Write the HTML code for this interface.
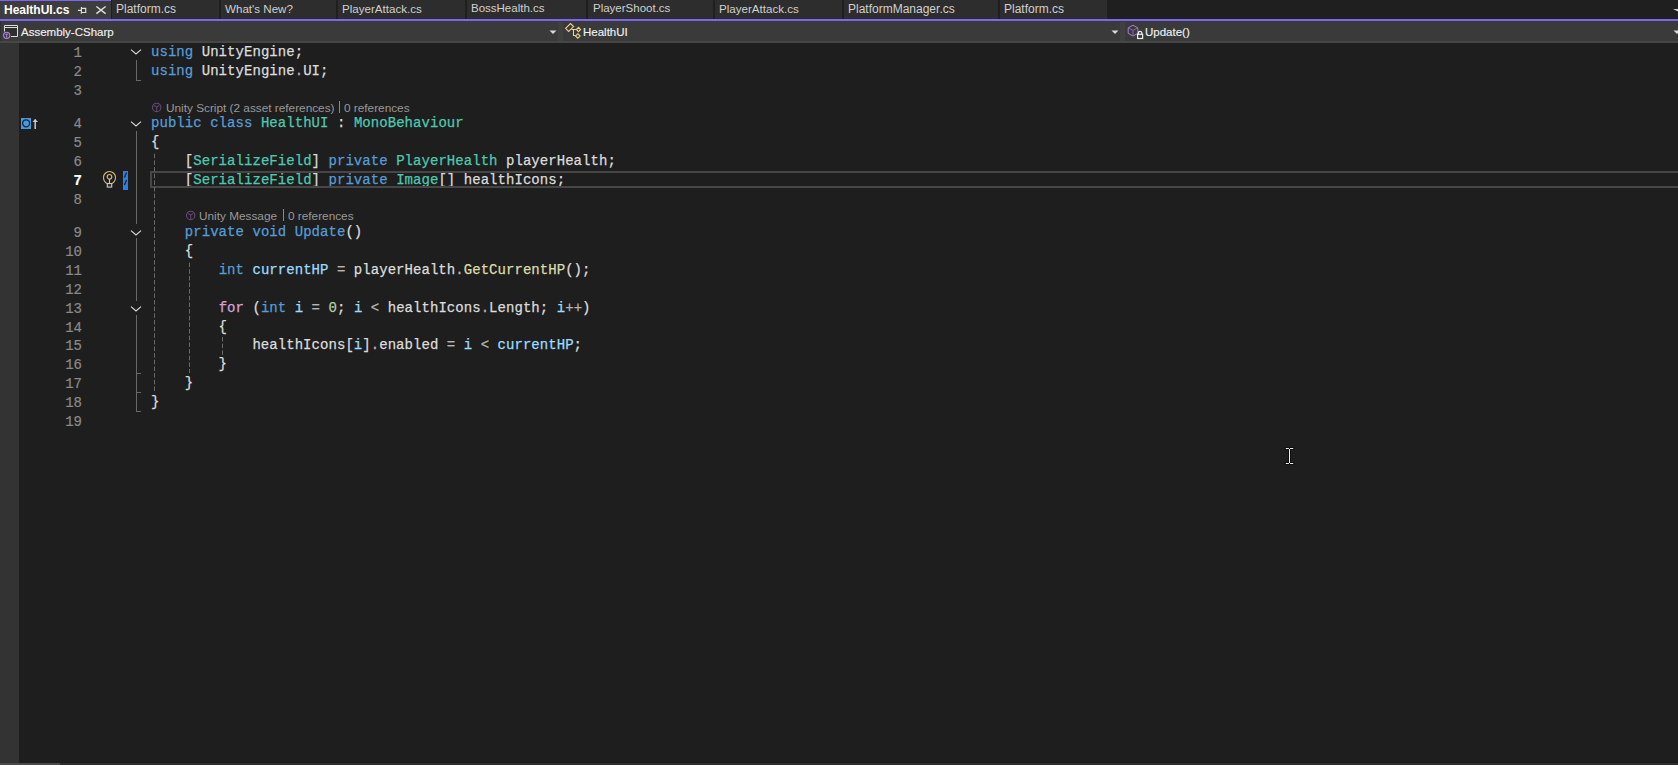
<!DOCTYPE html>
<html><head><meta charset="utf-8">
<style>
*{margin:0;padding:0;box-sizing:border-box}
html,body{width:1678px;height:765px;overflow:hidden;background:#1e1e1e}
body{position:relative;font-family:"Liberation Sans",sans-serif}
.abs{position:absolute}
#tabs{left:0;top:0;width:1678px;height:19px;background:#1f1f1f}
.tab{position:absolute;top:0;height:19px;background:#2d2d2d;color:#d0d0d0;font-size:12px;line-height:19px;white-space:pre}
.tab span{position:absolute;top:0px}
.sep{position:absolute;top:0;width:1px;height:19px;background:#222}
#acc{left:0;top:19px;width:1678px;height:2px;background:#7a66f0}
#nav{left:0;top:21px;width:1678px;height:20px;background:#3a3a3a}
#navb{left:0;top:41px;width:1678px;height:2px;background:#464646}
#margin{left:0;top:43px;width:19px;height:720px;background:#333333}
#hs{left:0;top:763px;width:1678px;height:2px;background:#2e2e2e}
.nav-t{position:absolute;top:22px;height:20px;line-height:20px;font-size:11.5px;color:#f0f0f0;-webkit-text-stroke:0.15px currentColor;white-space:pre}
.ln{position:absolute;left:40px;width:42px;text-align:right;font-family:"Liberation Mono",monospace;font-size:14px;-webkit-text-stroke:0.2px currentColor;color:#8a8a8a;height:19px;line-height:19px;padding-top:1px}
.code{position:absolute;left:151px;font-family:"Liberation Mono",monospace;font-size:14px;letter-spacing:0.05px;-webkit-text-stroke:0.25px currentColor;color:#dcdcdc;height:19px;line-height:19px;white-space:pre}
.k{color:#569cd6}.t{color:#4ec9b0}.m{color:#dcdcaa}.v{color:#9cdcfe}.o{color:#b4b4b4}.c{color:#d8a0df}.n{color:#b5cea8}
.lens{position:absolute;font-size:11.8px;color:#999999;white-space:pre;height:14px;line-height:14px}
.gd{position:absolute;width:1px;background-image:linear-gradient(#5a5a5a 60%,transparent 60%);background-size:1px 5px}
.fl{position:absolute;left:136px;width:1px;background:#686868}
.fh{position:absolute;left:136px;width:5px;height:1px;background:#686868}
</style></head><body>
<div id="tabs" class="abs">
  <div class="tab" style="left:0;width:111px;background:#3d3d3d;color:#fff;font-weight:bold"><div class="abs" style="left:0;top:0;width:111px;height:1px;background:#7a66f0"></div><span style="left:4px;top:1px">HealthUI.cs</span></div>
  <div class="tab" style="left:112px;width:107px"><span style="left:4px">Platform.cs</span></div>
  <div class="tab" style="left:221px;width:115px"><span style="left:4px;top:-1px;font-size:11.6px">What's New?</span></div>
  <div class="tab" style="left:338px;width:127px"><span style="left:4px;top:-1px;font-size:11.6px">PlayerAttack.cs</span></div>
  <div class="tab" style="left:467px;width:119px"><span style="left:4px;top:-1px;font-size:11.5px">BossHealth.cs</span></div>
  <div class="tab" style="left:588px;width:125px"><span style="left:5px;top:-1px;font-size:11.5px">PlayerShoot.cs</span></div>
  <div class="tab" style="left:715px;width:127px"><span style="left:4px;top:-1px;font-size:11.6px">PlayerAttack.cs</span></div>
  <div class="tab" style="left:844px;width:154px"><span style="left:4px">PlatformManager.cs</span></div>
  <div class="tab" style="left:1000px;width:107px"><span style="left:4px">Platform.cs</span></div>
</div>
<div id="acc" class="abs"></div>
<div id="nav" class="abs"></div>
<div id="navb" class="abs"></div>
<div class="nav-t" style="left:21px">Assembly-CSharp</div>
<div class="nav-t" style="left:583px">HealthUI</div>
<div class="nav-t" style="left:1145px">Update()</div>
<div id="margin" class="abs"></div>
<div id="hs" class="abs"></div>

<!-- line numbers -->
<div class="ln" style="top:43px">1</div>
<div class="ln" style="top:62px">2</div>
<div class="ln" style="top:81px">3</div>
<div class="ln" style="top:114px">4</div>
<div class="ln" style="top:133px">5</div>
<div class="ln" style="top:152px">6</div>
<div class="ln" style="top:171px;color:#fff;font-weight:bold">7</div>
<div class="ln" style="top:190px">8</div>
<div class="ln" style="top:223px">9</div>
<div class="ln" style="top:242px">10</div>
<div class="ln" style="top:261px">11</div>
<div class="ln" style="top:280px">12</div>
<div class="ln" style="top:299px">13</div>
<div class="ln" style="top:318px">14</div>
<div class="ln" style="top:336px">15</div>
<div class="ln" style="top:355px">16</div>
<div class="ln" style="top:374px">17</div>
<div class="ln" style="top:393px">18</div>
<div class="ln" style="top:412px">19</div>

<!-- code -->
<div class="code" style="top:43px"><span class="k">using</span> UnityEngine;</div>
<div class="code" style="top:62px"><span class="k">using</span> UnityEngine<span class="o">.</span>UI;</div>
<div class="lens" style="left:166px;top:101px">Unity Script (2 asset references)</div><div class="abs" style="left:339px;top:101px;width:1px;height:12px;background:#8a8a8a"></div><div class="lens" style="left:344px;top:101px">0 references</div>
<div class="code" style="top:114px"><span class="k">public</span> <span class="k">class</span> <span class="t">HealthUI</span> : <span class="t">MonoBehaviour</span></div>
<div class="code" style="top:133px">{</div>
<div class="code" style="top:152px">    [<span class="t">SerializeField</span>] <span class="k">private</span> <span class="t">PlayerHealth</span> playerHealth;</div>
<div class="code" style="top:171px">    [<span class="t">SerializeField</span>] <span class="k">private</span> <span class="t">Image</span>[] healthIcons;</div>
<div class="lens" style="left:199px;top:209px">Unity Message</div><div class="abs" style="left:283px;top:209px;width:1px;height:12px;background:#8a8a8a"></div><div class="lens" style="left:288px;top:209px">0 references</div>
<div class="code" style="top:223px">    <span class="k">private</span> <span class="k">void</span> <span class="k">Update</span>()</div>
<div class="code" style="top:242px">    {</div>
<div class="code" style="top:261px">        <span class="k">int</span> <span class="v">currentHP</span> <span class="o">=</span> playerHealth<span class="o">.</span><span class="m">GetCurrentHP</span>();</div>
<div class="code" style="top:299px">        <span class="c">for</span> (<span class="k">int</span> <span class="v">i</span> <span class="o">=</span> <span class="n">0</span>; <span class="v">i</span> <span class="o">&lt;</span> healthIcons<span class="o">.</span>Length; <span class="v">i</span><span class="o">++</span>)</div>
<div class="code" style="top:318px">        {</div>
<div class="code" style="top:336px">            healthIcons[<span class="v">i</span>]<span class="o">.</span>enabled <span class="o">=</span> <span class="v">i</span> <span class="o">&lt;</span> <span class="v">currentHP</span>;</div>
<div class="code" style="top:355px">        }</div>
<div class="code" style="top:374px">    }</div>
<div class="code" style="top:393px">}</div>


<!-- tab icons -->
<svg class="abs" style="left:76px;top:5px" width="12" height="11" viewBox="0 0 12 11"><path d="M1.9 5.4H5.4M5.4 2V8.8M5.4 3.4H9.7V7.5H5.4" stroke="#e0e0e0" stroke-width="1.15" fill="none"/></svg>
<svg class="abs" style="left:95px;top:5px" width="12" height="10" viewBox="0 0 12 10"><path d="M1.4 1.5L10.6 8.6M10.6 1.5L1.4 8.6" stroke="#e0e0e0" stroke-width="1.45" fill="none"/></svg>
<!-- tab strip dropdown far right -->
<svg class="abs" style="left:1673px;top:9px" width="6" height="5" viewBox="0 0 6 5"><path d="M0 0H7L6 3Z" fill="#d0d0d0"/></svg>
<!-- nav bar pieces -->
<div class="abs" style="left:0;top:21px;width:1px;height:20px;background:#303030"></div>
<div class="abs" style="left:558px;top:22px;width:5px;height:19px;background:#404040"></div>
<div class="abs" style="left:1120px;top:22px;width:5px;height:19px;background:#404040"></div>
<svg class="abs" style="left:549px;top:30px" width="8" height="5" viewBox="0 0 8 5"><path d="M0.5 0.5H7.5L4 4Z" fill="#d8d8d8"/></svg>
<svg class="abs" style="left:1111px;top:30px" width="8" height="5" viewBox="0 0 8 5"><path d="M0.5 0.5H7.5L4 4Z" fill="#d8d8d8"/></svg>
<svg class="abs" style="left:1673px;top:30px" width="6" height="5" viewBox="0 0 6 5"><path d="M0.5 0.5H7.5L4 4Z" fill="#d8d8d8"/></svg>
<!-- assembly icon -->
<svg class="abs" style="left:2px;top:23px" width="18" height="18" viewBox="0 0 18 18"><rect x="2.5" y="2.5" width="13" height="11" fill="#2e2e2e"/><path d="M2.5 8.5V2.5H15.5V13.5H9" stroke="#dcdcdc" stroke-width="1" fill="none"/><path d="M3 4.5H15" stroke="#dcdcdc" stroke-width="1"/><circle cx="4.7" cy="12.3" r="3.1" stroke="#b085e0" stroke-width="1.1" fill="#3a3a3a"/><path d="M3.3 11.2H6.1M4.7 11.2V14.7" stroke="#b085e0" stroke-width="1" fill="none"/></svg>
<!-- class icon -->
<svg class="abs" style="left:563px;top:22px" width="20" height="19" viewBox="0 0 20 19"><g stroke="#efd08a" stroke-width="1.1" fill="none" stroke-linejoin="miter"><path d="M2.6 6.3L7.5 1.5L10.6 4.6L5.6 9.4Z"/><path d="M15.5 5.4L17.6 7.5L15.5 9.6L13.4 7.5Z"/><path d="M14.8 11.7L17.1 14L14.8 16.3L12.5 14Z"/><path d="M8.5 7.5H13M10.5 7.5V13.5H12.5"/></g></svg>
<!-- method icon -->
<svg class="abs" style="left:1126px;top:22px" width="20" height="19" viewBox="0 0 20 19"><g stroke="#a77ad6" stroke-width="1" fill="none"><path d="M7 3.2L11.8 5.8V11.4L7 14L2.2 11.4V5.8Z"/><path d="M2.2 5.8L7 8.4L11.8 5.8M7 8.4V14" stroke-opacity="0.7"/></g><path d="M12.3 12.2V11.2A1.8 1.8 0 0 1 15.9 11.2V12.2" stroke="#f0f0f0" stroke-width="1.2" fill="none"/><rect x="11.6" y="12.3" width="5" height="4.2" stroke="#f0f0f0" stroke-width="1.2" fill="#3a3a3a"/></svg>

<!-- gutter: line 4 indicator -->
<svg class="abs" style="left:21px;top:118px" width="10" height="11" viewBox="0 0 10 11"><rect width="10" height="11" fill="#4898dc"/><circle cx="5.1" cy="5.3" r="3.5" stroke="#14253c" stroke-width="1.3" fill="none"/></svg>
<svg class="abs" style="left:32px;top:118px" width="7" height="12" viewBox="0 0 7 12"><path d="M3.2 1.5V11" stroke="#c8c8c8" stroke-width="1.5"/><path d="M0.5 4L3.2 1L6 4Z" fill="#c8c8c8"/></svg>
<!-- lightbulb -->
<svg class="abs" style="left:102px;top:170px" width="15" height="19" viewBox="0 0 15 19"><path d="M5 13.5C2.5 12 1.5 10 1.5 7.5A6 6 0 0 1 13.5 7.5C13.5 10 12.5 12 10 13.5" stroke="#d9b778" stroke-width="1.1" fill="none"/><circle cx="7.5" cy="6.8" r="2.3" stroke="#d9b778" stroke-width="1.2" fill="none"/><path d="M7.5 9V13" stroke="#e6c47c" stroke-width="1.1"/><rect x="5.3" y="13.5" width="4.4" height="3.6" stroke="#c8c8c8" stroke-width="1.1" fill="#303030"/></svg>
<!-- change bar -->
<svg class="abs" style="left:123px;top:171px" width="5" height="19" viewBox="0 0 5 19"><rect width="5" height="19" fill="#2f7fe3"/><path d="M1.5 6.5L3.5 1.5M1.5 14L3.5 9" stroke="#16243a" stroke-width="1.3"/></svg>

<!-- current line box -->
<div class="abs" style="left:150px;top:171px;width:1528px;height:17px;border:2px solid #464646;border-right:none"></div>

<!-- fold chevrons -->
<svg class="abs" style="left:130px;top:48px" width="12" height="8" viewBox="0 0 12 8"><path d="M1 1.6L6 5.9L11 1.6" stroke="#d8d8d8" stroke-width="1.2" fill="none"/></svg>
<svg class="abs" style="left:130px;top:120px" width="12" height="8" viewBox="0 0 12 8"><path d="M1 1.6L6 5.9L11 1.6" stroke="#d8d8d8" stroke-width="1.2" fill="none"/></svg>
<svg class="abs" style="left:130px;top:229px" width="12" height="8" viewBox="0 0 12 8"><path d="M1 1.6L6 5.9L11 1.6" stroke="#d8d8d8" stroke-width="1.2" fill="none"/></svg>
<svg class="abs" style="left:130px;top:305px" width="12" height="8" viewBox="0 0 12 8"><path d="M1 1.6L6 5.9L11 1.6" stroke="#d8d8d8" stroke-width="1.2" fill="none"/></svg>
<!-- fold lines -->
<div class="fl" style="top:60px;height:21px"></div><div class="fh" style="top:80px"></div>
<div class="fl" style="top:131px;height:93px"></div>
<div class="fl" style="top:238px;height:63px"></div>
<div class="fl" style="top:315px;height:97px"></div>
<div class="fh" style="top:373px"></div><div class="fh" style="top:392px"></div><div class="fh" style="top:411px"></div>
<!-- indent guides -->
<svg class="abs" style="left:0;top:0" width="240" height="420"><g stroke="#6a6a6a" stroke-width="1" stroke-dasharray="4.5 2.15"><path d="M154.5 153.7V392"/><path d="M189.5 262.6V373"/><path d="M222.5 337V355"/></g></svg>
<!-- codelens icons -->
<svg class="abs" style="left:151px;top:102px" width="12" height="12" viewBox="0 0 12 12"><circle cx="5.7" cy="5.4" r="4.2" stroke="#654a78" stroke-width="1.1" fill="none"/><path d="M3.2 3.6L5.7 5L8.2 3.6M5.7 5V9.5" stroke="#5a4470" stroke-width="1.1" fill="none"/></svg>
<svg class="abs" style="left:185px;top:210px" width="12" height="12" viewBox="0 0 12 12"><circle cx="5.7" cy="5.4" r="4.2" stroke="#654a78" stroke-width="1.1" fill="none"/><path d="M3.2 3.6L5.7 5L8.2 3.6M5.7 5V9.5" stroke="#5a4470" stroke-width="1.1" fill="none"/></svg>

<!-- mouse I-beam -->
<svg class="abs" style="left:1284px;top:446px" width="12" height="20" viewBox="0 0 12 20"><g stroke="#0c0c0c" stroke-width="2.6" fill="none" stroke-linecap="square"><path d="M2 2.5H9M5.5 3V17M2 17.5H9"/></g><g stroke="#f2f2f2" stroke-width="1" fill="none"><path d="M1.8 2.5H4.9M6.1 2.5H9.2M5.5 3V17M1.8 17.5H4.9M6.1 17.5H9.2"/></g></svg>
<!-- scrollbar thumb -->
<div class="abs" style="left:0;top:763px;width:60px;height:2px;background:#4a4a4a"></div>
</body></html>
